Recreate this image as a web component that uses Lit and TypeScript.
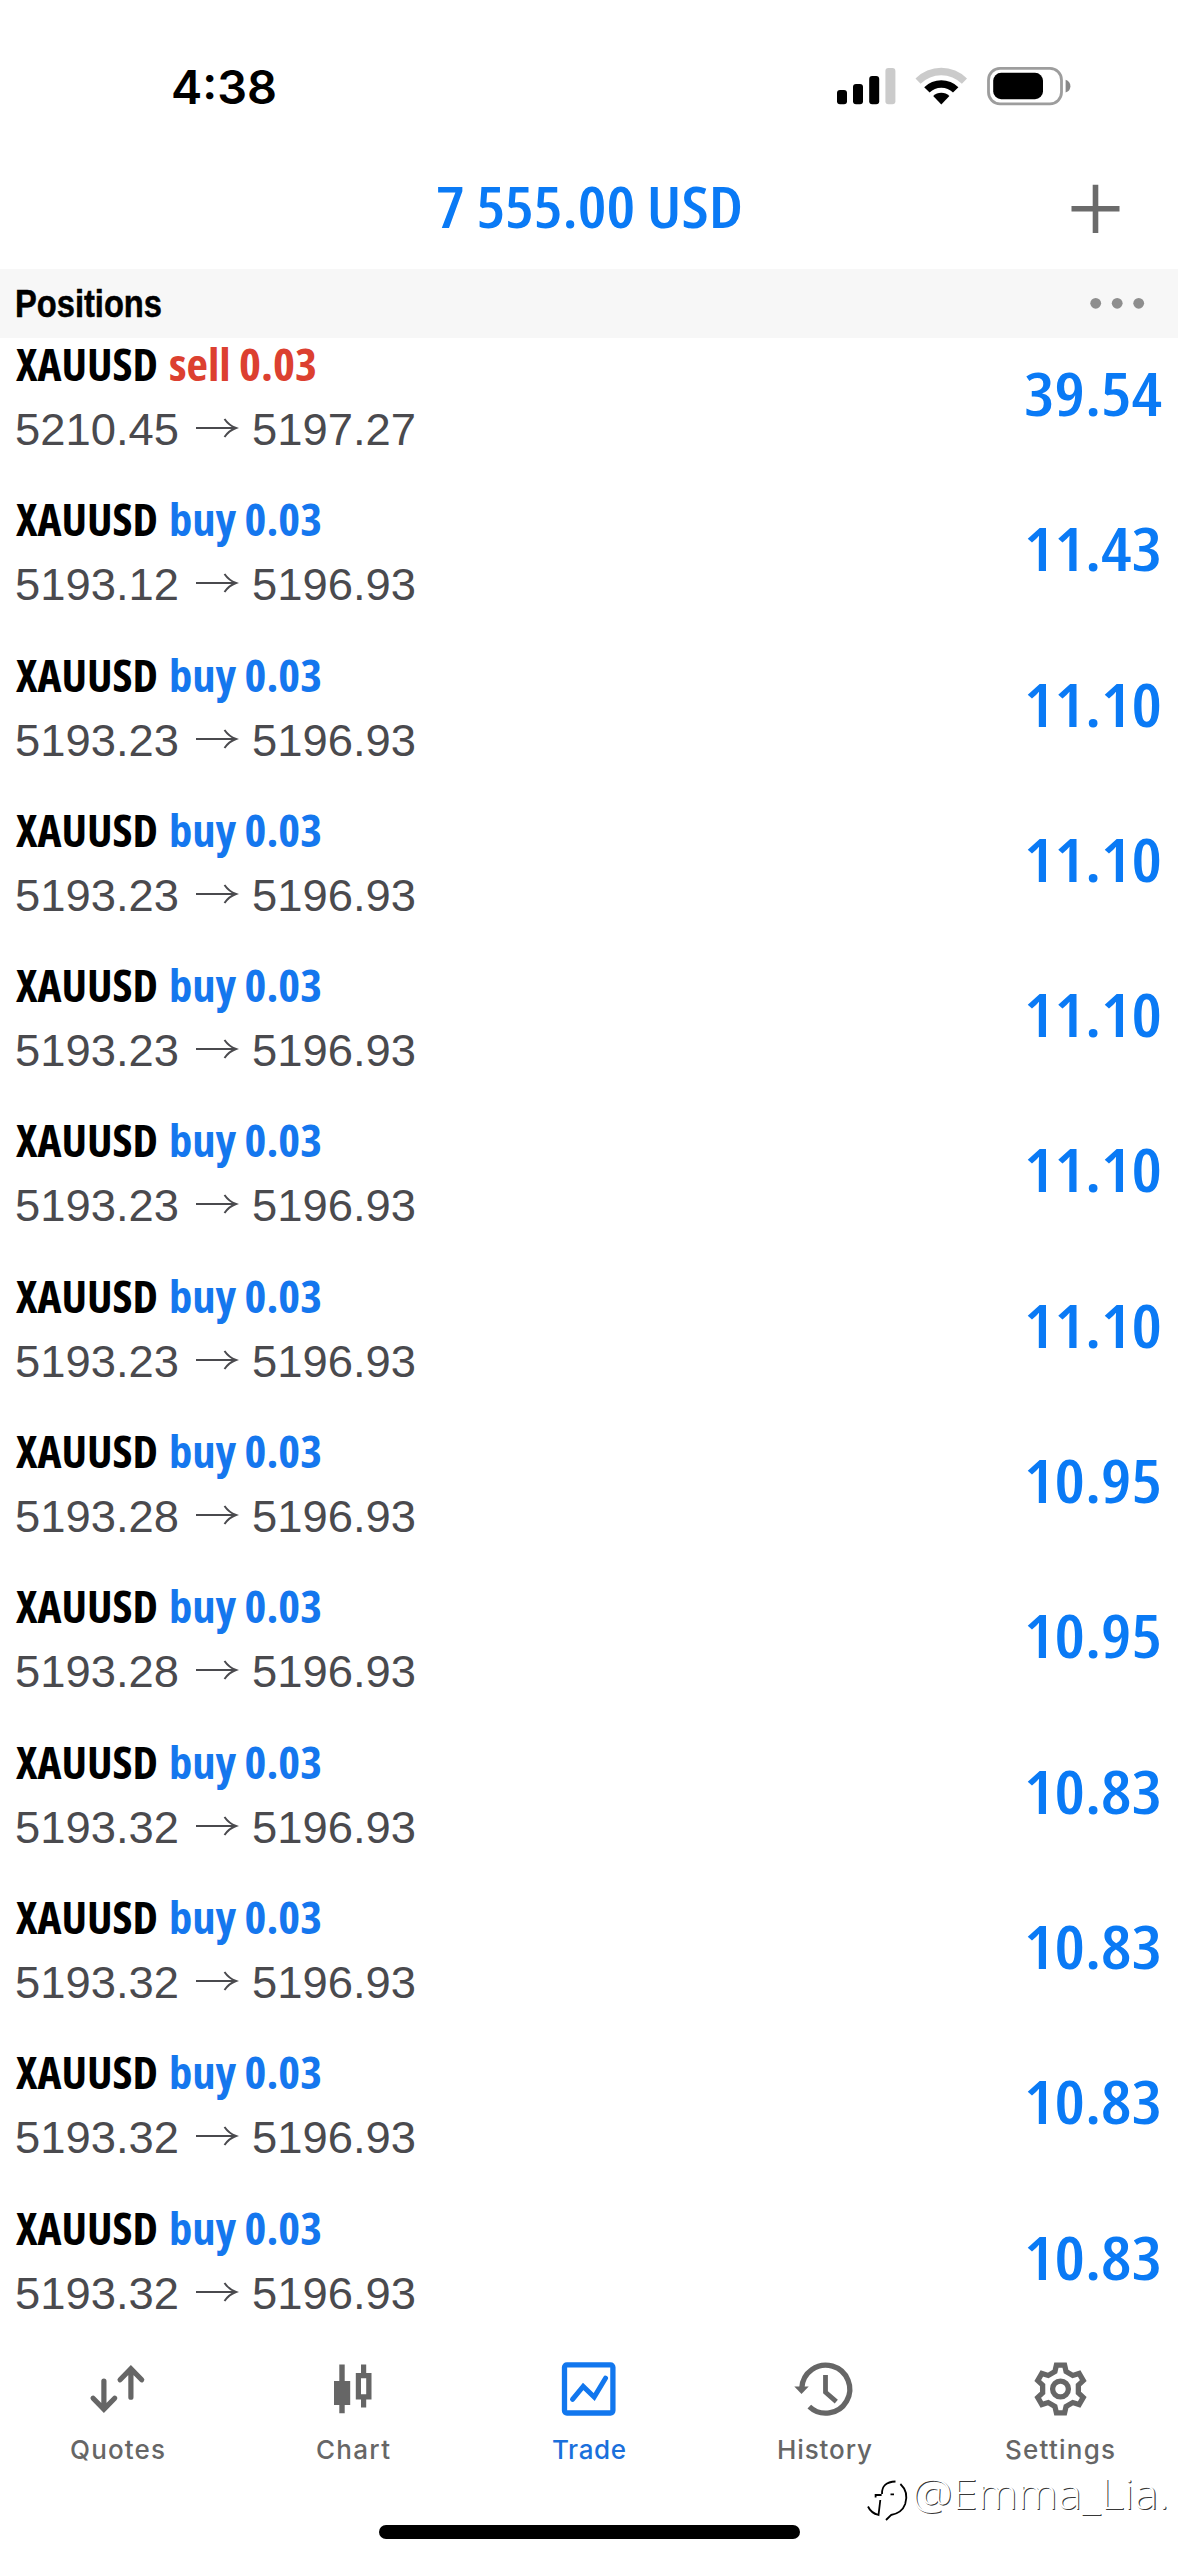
import { LitElement, html, svg, css } from "lit";

type Side = "buy" | "sell";
interface Position {
  side: Side;
  open: string;
  current: string;
  profit: string;
}

const buy = (open: string, profit: string): Position => ({ side: "buy", open, current: "5196.93", profit });

const POSITIONS: Position[] = [
  { side: "sell", open: "5210.45", current: "5197.27", profit: "39.54" },
  buy("5193.12", "11.43"),
  buy("5193.23", "11.10"),
  buy("5193.23", "11.10"),
  buy("5193.23", "11.10"),
  buy("5193.23", "11.10"),
  buy("5193.23", "11.10"),
  buy("5193.28", "10.95"),
  buy("5193.28", "10.95"),
  buy("5193.32", "10.83"),
  buy("5193.32", "10.83"),
  buy("5193.32", "10.83"),
  buy("5193.32", "10.83"),
];

/* A line of text fitted to an exact width; the baseline sits at `base`. */
const fit = (
  text: string,
  width: number,
  height: number,
  base: number,
  cls: string,
  adjust: "spacing" | "spacingAndGlyphs" = "spacingAndGlyphs"
) => html`<svg class="fit ${cls}" width=${width} height=${height}>
  <text x="0" y=${base} textLength=${width} lengthAdjust=${adjust}>${text}</text>
</svg>`;

const gearPoints = (): string => {
  const pts: string[] = [];
  for (let i = 0; i < 6; i++) {
    const a = (i * Math.PI) / 3;
    for (const [x, y] of [[-5.6, -17.4], [-4.1, -23.9], [4.1, -23.9], [5.6, -17.4]]) {
      pts.push(`${(x * Math.cos(a) - y * Math.sin(a)).toFixed(2)},${(x * Math.sin(a) + y * Math.cos(a)).toFixed(2)}`);
    }
  }
  return pts.join(" ");
};

/* Tab icons are drawn around the origin of a 60 x 60 box. */
const TABS = [
  {
    label: "Quotes",
    width: 95,
    icon: svg`<g fill="none" stroke="currentColor" stroke-width="5.2" stroke-linecap="round">
      <path d="M-14.6 -8V18M-25.4 9.2L-14.6 20.3L-3.8 9.2"/>
      <path d="M12.4 8.2V-18M1.6 -9.2L12.4 -20.3L23.2 -9.2"/></g>`,
  },
  {
    label: "Chart",
    width: 74,
    icon: svg`<path fill="currentColor" fill-rule="evenodd" d="M-14.2 -24.4h5.4V-8h5.5V16h-5.5v8.2h-5.4V16h-5.3V-8h5.3zM7.5 -24.4h5.2v8.4h5.3V10.6h-5.3v8h-5.2v-8H2.3V-16H7.5zM7.5 -10.8V5.2h5.2V-10.8z"/>`,
  },
  {
    label: "Trade",
    width: 74,
    icon: svg`<g fill="none" stroke="currentColor" stroke-width="5.3">
      <rect x="-25" y="-24.2" width="48.4" height="48.2" rx="2.4"/>
      <path stroke-linecap="round" stroke-width="5" d="M-17 10.4L-6.3 -2.6L4.7 8L16 -10.8"/></g>`,
  },
  {
    label: "History",
    width: 95,
    icon: svg`<g fill="none" stroke="currentColor" stroke-width="5.3">
      <path d="M-23.7 -1A24 24 0 1 1 -16.2 17.6"/><path stroke-width="4.8" d="M0 -14V3.2L10.8 12.6"/></g>
      <path fill="currentColor" d="M-31.2 -2.6H-16.8L-24 5z"/>`,
  },
  {
    label: "Settings",
    width: 110,
    icon: svg`<g fill="none" stroke="currentColor" stroke-width="5.3">
      <polygon points=${gearPoints()}/><circle r="7.9"/></g>`,
  },
];

class AppRoot extends LitElement {
  static styles = css`
    :host { display: block; }
    .screen {
      position: relative; display: flex; flex-direction: column; width: 1178px; height: 2560px;
      background: #fff; overflow: hidden; font-family: "Open Sans", "Noto Sans", sans-serif;
    }
    svg { display: block; overflow: visible; flex: none; }
    .fit { fill: currentColor; }
    .status { height: 150px; display: flex; justify-content: space-between; box-sizing: border-box; padding: 60px 106px 0 171px; }
    .clock { font: 600 46px Inter, sans-serif; }
    .header { height: 119px; display: grid; grid-template-columns: 1fr auto 1fr; align-items: start; padding: 0 55px; color: #0a7af5; }
    .title { font-size: 58.5px; font-weight: 650; font-stretch: 75%; }
    .plus { justify-self: end; margin-top: 31px; }
    .section { height: 69px; background: #f7f7f7; display: flex; justify-content: space-between; padding: 0 35px 0 15px; }
    .heading { font: 700 39px "Liberation Sans", sans-serif; stroke: #000; stroke-width: 0.5px; }
    .list { height: 1992px; }
    .row { display: flex; justify-content: space-between; height: 155.3px; padding: 0 16px; }
    .name { display: flex; gap: 11px; }
    .symbol { color: #000; }
    .symbol, .deal { font-size: 45.5px; font-weight: 670; font-stretch: 75%; }
    .buy { color: #1577ee; }
    .sell { color: #dc4030; }
    .prices { display: flex; gap: 16px; color: #4a4a4e; margin-left: -1.5px; }
    .price { font: 400 44.5px "Liberation Sans", sans-serif; }
    .profit { font-size: 60px; font-weight: 650; font-stretch: 75%; color: #0a7af5; }
    .tabs { display: flex; height: 150px; position: relative; }
    .tab { flex: 1; display: flex; flex-direction: column; align-items: center; gap: 6px; padding-top: 28.5px; color: #666; }
    .active { color: #1a70dc; }
    .active .icon { color: #1277ee; }
    .label { font: 450 26px Inter, sans-serif; }
    .home { width: 421px; height: 14px; border-radius: 7px; background: #000; margin: 45px 0 0 379px; }
    .watermark { position: absolute; left: 867px; top: 2470px; display: flex; gap: 4px; }
    .author { font-size: 43px; font-weight: 300; fill: #fff; text-shadow: 1px 1px 0 rgba(0, 0, 0, 0.8); }
  `;

  private row(p: Position) {
    return html`<div class="row">
      <div>
        <div class="name">
          ${fit("XAUUSD", 142, 64, 43, "symbol")}
          ${p.side === "buy" ? fit("buy 0.03", 153, 64, 43, "deal buy") : fit("sell 0.03", 148, 64, 43, "deal sell")}
        </div>
        <div class="prices">
          ${fit(p.open, 164, 60, 43, "price")}
          <svg width="41" height="60" fill="none" stroke="currentColor" stroke-width="2">
            <path d="M1 26H41M29.5 17Q34 23.5 41 26Q34 28.5 29.5 35" />
          </svg>
          ${fit(p.current, 164, 60, 43, "price")}
        </div>
      </div>
      ${fit(p.profit, 138, 120, 77.5, "profit")}
    </div>`;
  }

  render() {
    return html`<div class="screen">
      <div class="status">
        ${fit("4:38", 106, 60, 44.3, "clock")}
        <svg width="236" height="50" viewBox="835 60 236 50">
          <rect x="836" y="90" width="10" height="14.3" rx="3" />
          <rect x="852" y="84" width="10" height="20.3" rx="3" />
          <rect x="868.2" y="76" width="10" height="28.3" rx="3" />
          <rect x="884.4" y="68" width="10" height="36.3" rx="3" fill="#cbcbcb" />
          <path fill="#cbcbcb" d="M914.5 78.5A36.6 37 0 0 1 966 78.5L960.9 83.7A29.4 29.4 0 0 0 919.6 83.7z" />
          <path d="M923.2 87.2A24.3 24.3 0 0 1 957.4 87.2L952 92.5A16.6 16.6 0 0 0 928.6 92.5z" />
          <path d="M932.2 96.1A11.6 11.6 0 0 1 948.4 96.1L940.3 104.4z" />
          <rect x="987.5" y="68.4" width="73" height="35.4" rx="11.5" fill="none" stroke="#9d9d9d" stroke-width="2.8" />
          <rect x="992.2" y="72.8" width="49.8" height="26.4" rx="8" />
          <path fill="#888" d="M1064.6 79.8Q1069.4 81.6 1069.4 86.2Q1069.4 90.8 1064.6 92.6z" />
        </svg>
      </div>
      <div class="header">
        <span></span>
        ${fit("7 555.00 USD", 307, 100, 78.3, "title")}
        <svg class="plus" width="56" height="56" stroke="#6b6b6b" stroke-width="5.6">
          <path d="M4.5 27.7H52.5M28.5 3.7V51.9" />
        </svg>
      </div>
      <div class="section">
        ${fit("Positions", 147, 69, 48.3, "heading")}
        <svg width="53" height="69" fill="#8e8e8e">
          <circle cx="5.7" cy="34.3" r="5.4" /><circle cx="27.2" cy="34.3" r="5.4" /><circle cx="48.7" cy="34.3" r="5.4" />
        </svg>
      </div>
      <div class="list">${POSITIONS.map((p) => this.row(p))}</div>
      <div class="tabs">
        ${TABS.map(
          (t) => html`<div class="tab ${t.label === "Trade" ? "active" : ""}">
            <svg class="icon" width="60" height="60" viewBox="-30.5 -30 60 60">${t.icon}</svg>
            ${fit(t.label, t.width, 40, 33.5, "label", "spacing")}
          </div>`
        )}
      </div>
      <div class="home"></div>
      <div class="watermark">
        <svg width="41" height="54" viewBox="0 0 41 54" fill="none" stroke="#000" stroke-width="1.8">
          <path d="M1 36.5Q4 43 11.5 45L13.3 30M8.6 27.5V25H14.6M15 24Q14.5 12 28.5 11.5M33.4 14Q42 22 38.2 34Q35 43 24 45L19 50M23.5 24.3H27" />
        </svg>
        ${fit("@Emma_Lia.", 257, 54, 39, "author")}
      </div>
    </div>`;
  }
}
customElements.define("app-root", AppRoot);
